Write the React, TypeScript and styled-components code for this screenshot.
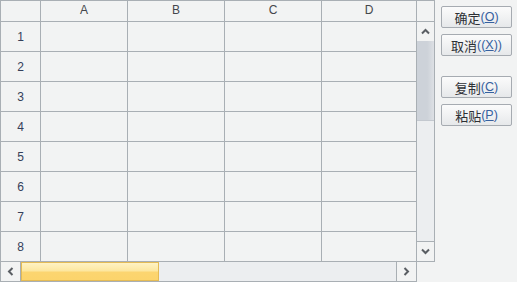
import React from 'react';
import styled, {createGlobalStyle} from 'styled-components';

const COLUMNS = ['A', 'B', 'C', 'D'];
const ROWS = [1, 2, 3, 4, 5, 6, 7, 8];

const GlobalStyle = createGlobalStyle`
  html, body {
    margin: 0;
    padding: 0;
    background: #f2f3f3;
  }
  body {
    font-family: Arial, "Liberation Sans", "Noto Sans CJK SC", sans-serif;
  }
`;

const Chevron: React.FC<{dir: 'up' | 'down' | 'left' | 'right'}> = ({dir}) => {
  const rot = {up: 0, right: 90, down: 180, left: 270}[dir];
  return (
    <svg width="9" height="9" viewBox="0 0 9 9" style={{transform: `rotate(${rot}deg)`}}>
      <path d="M1 6.5 L4.5 3 L8 6.5" fill="none" stroke="#5a5e63" strokeWidth="2" />
    </svg>
  );
};

const Mnemonic: React.FC<{label: string; letter: string; wrap?: boolean}> = ({
  label,
  letter,
  wrap,
}) => (
  <>
    <CjkLabel>{label}</CjkLabel>
    <Accel>
      {wrap ? '((' : '('}
      <u>{letter}</u>
      {wrap ? '))' : ')'}
    </Accel>
  </>
);

const App: React.FC = () => {
  return (
    <>
      <GlobalStyle />
      <Page>
        <GridPanel>
          <TopArea>
            <Sheet>
              <HeaderCell />
              {COLUMNS.map(c => (
                <HeaderCell key={c}>{c}</HeaderCell>
              ))}
              {ROWS.map(r => (
                <React.Fragment key={r}>
                  <RowHeader>{r}</RowHeader>
                  {COLUMNS.map(c => (
                    <Cell key={c} />
                  ))}
                </React.Fragment>
              ))}
            </Sheet>
            <VScroll>
              <Corner />
              <ArrowButton $v>
                <Chevron dir="up" />
              </ArrowButton>
              <VTrack>
                <VThumb />
              </VTrack>
              <ArrowButton $v>
                <Chevron dir="down" />
              </ArrowButton>
            </VScroll>
          </TopArea>
          <HScroll>
            <ArrowButton>
              <Chevron dir="left" />
            </ArrowButton>
            <HTrack>
              <HThumb />
            </HTrack>
            <ArrowButton>
              <Chevron dir="right" />
            </ArrowButton>
          </HScroll>
        </GridPanel>
        <ButtonColumn>
          <ButtonGroup>
            <ActionButton>
              <Mnemonic label="确定" letter="O" />
            </ActionButton>
            <ActionButton>
              <Mnemonic label="取消" letter="X" wrap />
            </ActionButton>
          </ButtonGroup>
          <ButtonGroup>
            <ActionButton>
              <Mnemonic label="复制" letter="C" />
            </ActionButton>
            <ActionButton>
              <Mnemonic label="粘贴" letter="P" />
            </ActionButton>
          </ButtonGroup>
        </ButtonColumn>
      </Page>
    </>
  );
};

const Page = styled.div`
  display: flex;
  width: 517px;
  height: 282px;
  background: #f2f3f3;
`;

const GridPanel = styled.div`
  display: flex;
  flex-direction: column;
  width: 435px;
`;

const TopArea = styled.div`
  display: flex;
  height: 262px;
`;

const Sheet = styled.div`
  display: grid;
  grid-template-columns: 40px 87px 97px 97px 95px;
  grid-template-rows: 21px repeat(8, 30px);
  border-left: 1px solid #a9afb4;
  border-top: 1px solid #a9afb4;
  background: #f2f3f3;
`;

const BaseCell = styled.div`
  box-sizing: border-box;
  border-right: 1px solid #a9afb4;
  border-bottom: 1px solid #a9afb4;
  display: flex;
  align-items: center;
  justify-content: center;
  font-size: 12px;
`;

const HeaderCell = styled(BaseCell)`
  color: #44474c;
  padding-bottom: 2px;
`;

const RowHeader = styled(BaseCell)`
  color: #34405a;
`;

const Cell = styled(BaseCell)``;

const VScroll = styled.div`
  display: flex;
  flex-direction: column;
  width: 18px;
  border-top: 1px solid #a9afb4;
  border-right: 1px solid #a9afb4;
  border-bottom: 1px solid #a9afb4;
  box-sizing: border-box;
  background: #eceef0;
`;

const Corner = styled.div`
  height: 20px;
  border-bottom: 1px solid #a9afb4;
  background: #f2f3f3;
  flex: none;
`;

const ArrowButton = styled.div<{$v?: boolean}>`
  flex: none;
  display: flex;
  align-items: center;
  justify-content: center;
  width: ${p => (p.$v ? 'auto' : '19px')};
  height: ${p => (p.$v ? '19px' : 'auto')};
  background: #f2f3f3;
  border-color: #a9afb4;
  border-style: solid;
  border-width: 0;
  &:first-of-type {
    ${p => (p.$v ? 'border-bottom-width: 1px;' : 'border-right-width: 1px;')}
  }
  &:last-of-type {
    ${p => (p.$v ? 'border-top-width: 1px;' : 'border-left-width: 1px;')}
  }
`;

const VTrack = styled.div`
  flex: 1;
  display: flex;
  flex-direction: column;
  background: #eceef0;
`;

const VThumb = styled.div`
  height: 79px;
  background: linear-gradient(to right, #cdd2d9 0%, #cdd2d9 60%, #dde0e4 100%);
  border-bottom: 1px solid #c3c8cf;
`;

const HScroll = styled.div`
  display: flex;
  width: 417px;
  height: 20px;
  box-sizing: border-box;
  border-left: 1px solid #a9afb4;
  border-right: 1px solid #a9afb4;
  border-bottom: 1px solid #a9afb4;
  background: #eceef0;
`;

const HTrack = styled.div`
  flex: 1;
  display: flex;
  background: #eceef0;
`;

const HThumb = styled.div`
  width: 138px;
  box-sizing: border-box;
  border: 1px solid #e4bb55;
  background: linear-gradient(to bottom, #fff3c4 0%, #fde7a0 45%, #fcd570 55%, #fcd46c 100%);
`;

const ButtonColumn = styled.div`
  display: flex;
  flex-direction: column;
  gap: 20px;
  padding: 6px 0 0 6px;
`;

const ButtonGroup = styled.div`
  display: flex;
  flex-direction: column;
  gap: 6px;
`;

const ActionButton = styled.button`
  width: 71px;
  height: 22px;
  padding: 0;
  box-sizing: border-box;
  border: 1px solid #a6abb1;
  border-radius: 2px;
  background: linear-gradient(to bottom, #fbfbfb 0%, #f1f2f3 50%, #e6e8ea 100%);
  font-family: Arial, "Liberation Sans", "Noto Sans CJK SC", sans-serif;
  font-size: 13px;
  color: #2d3035;
  display: flex;
  align-items: center;
  justify-content: center;
`;

const CjkLabel = styled.span`
  font-family: "Noto Sans CJK SC", sans-serif;
  font-size: 13px;
`;

const Accel = styled.span`
  color: #35609f;
  font-size: 12.5px;
  u {
    text-underline-offset: 1px;
  }
`;

export default App;
